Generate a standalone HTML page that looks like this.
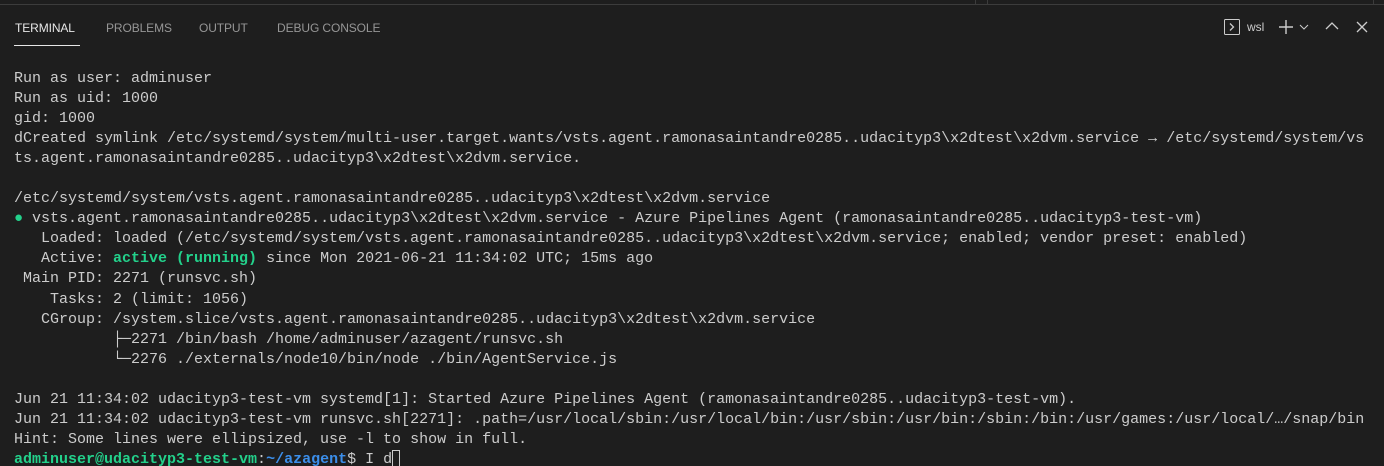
<!DOCTYPE html>
<html><head><meta charset="utf-8"><style>
html,body{margin:0;padding:0;background:#1e1e1e;width:1384px;height:466px;overflow:hidden;position:relative}
.topline{position:absolute;left:0;top:4px;width:1384px;height:1px;background:#3c3c3c}
.sep{position:absolute;top:0;width:1px;height:4px;background:#3c3c3c}
.tabs{position:absolute;top:21px;left:0;font-family:"Liberation Sans",sans-serif;font-size:12px;color:#969696}
.tab{position:absolute;white-space:nowrap;letter-spacing:-0.1px}
.act{color:#e7e7e7}
.uline{position:absolute;left:14px;top:45px;width:66px;height:1px;background:#e7e7e7}
pre{position:absolute;left:14px;top:69px;margin:0;font-family:"Liberation Mono","DejaVu Sans Mono",monospace;font-size:15px;line-height:20.05px;color:#cccccc;white-space:pre}
.g{color:#23d18b;font-weight:bold}
.b{color:#3b8eea;font-weight:bold}
.cur{display:inline-block;width:8px;height:17px;border:1px solid #cccccc;vertical-align:-4px;box-sizing:border-box}
.ic{position:absolute;font-family:"Liberation Sans",sans-serif;color:#cccccc}
</style></head><body>
<div class="topline"></div>
<div class="sep" style="left:975px"></div>
<div class="sep" style="left:987px"></div>
<div class="sep" style="left:1373px"></div>
<div class="tabs">
<span class="tab act" style="left:15px">TERMINAL</span>
<span class="tab" style="left:106px">PROBLEMS</span>
<span class="tab" style="left:199px">OUTPUT</span>
<span class="tab" style="left:277px">DEBUG CONSOLE</span>
</div>
<div class="uline"></div>
<svg style="position:absolute;left:1224px;top:19px" width="16" height="16" viewBox="0 0 16 16"><rect x="0.5" y="0.5" width="15" height="15" rx="1" fill="none" stroke="#cccccc"/><path d="M6 4.5 L9.5 8 L6 11.5" fill="none" stroke="#cccccc" stroke-width="1.3"/></svg>
<span class="ic" style="left:1247px;top:20px;font-size:12px">wsl</span>
<svg style="position:absolute;left:1278px;top:19px" width="16" height="16" viewBox="0 0 16 16"><path d="M8 1V15M1 8H15" stroke="#cccccc" stroke-width="1.4"/></svg>
<svg style="position:absolute;left:1299px;top:23px" width="10" height="8" viewBox="0 0 10 8"><path d="M1 2L5 6L9 2" fill="none" stroke="#cccccc" stroke-width="1"/></svg>
<svg style="position:absolute;left:1325px;top:21px" width="14" height="10" viewBox="0 0 14 10"><path d="M1 8L7 2L13 8" fill="none" stroke="#cccccc" stroke-width="1.3"/></svg>
<svg style="position:absolute;left:1356px;top:21px" width="12" height="12" viewBox="0 0 12 12"><path d="M1 1L11 11M11 1L1 11" stroke="#cccccc" stroke-width="1.3"/></svg>
<pre>Run as user: adminuser
Run as uid: 1000
gid: 1000
dCreated symlink /etc/systemd/system/multi-user.target.wants/vsts.agent.ramonasaintandre0285..udacityp3\x2dtest\x2dvm.service → /etc/systemd/system/vs
ts.agent.ramonasaintandre0285..udacityp3\x2dtest\x2dvm.service.

/etc/systemd/system/vsts.agent.ramonasaintandre0285..udacityp3\x2dtest\x2dvm.service
<span class="g">●</span> vsts.agent.ramonasaintandre0285..udacityp3\x2dtest\x2dvm.service - Azure Pipelines Agent (ramonasaintandre0285..udacityp3-test-vm)
   Loaded: loaded (/etc/systemd/system/vsts.agent.ramonasaintandre0285..udacityp3\x2dtest\x2dvm.service; enabled; vendor preset: enabled)
   Active: <span class="g">active (running)</span> since Mon 2021-06-21 11:34:02 UTC; 15ms ago
 Main PID: 2271 (runsvc.sh)
    Tasks: 2 (limit: 1056)
   CGroup: /system.slice/vsts.agent.ramonasaintandre0285..udacityp3\x2dtest\x2dvm.service
           ├─2271 /bin/bash /home/adminuser/azagent/runsvc.sh
           └─2276 ./externals/node10/bin/node ./bin/AgentService.js

Jun 21 11:34:02 udacityp3-test-vm systemd[1]: Started Azure Pipelines Agent (ramonasaintandre0285..udacityp3-test-vm).
Jun 21 11:34:02 udacityp3-test-vm runsvc.sh[2271]: .path=/usr/local/sbin:/usr/local/bin:/usr/sbin:/usr/bin:/sbin:/bin:/usr/games:/usr/local/…/snap/bin
Hint: Some lines were ellipsized, use -l to show in full.
<span class="g">adminuser@udacityp3-test-vm</span>:<span class="b">~/azagent</span>$ I d<span class="cur"></span></pre>
</body></html>
